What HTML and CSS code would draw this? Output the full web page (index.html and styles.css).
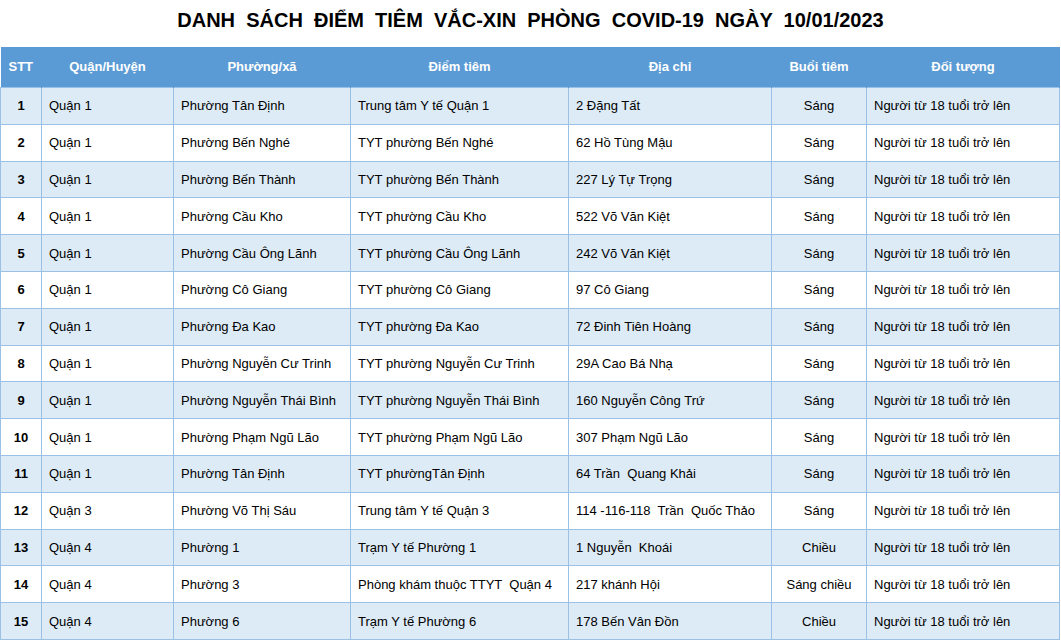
FILE: index.html
```html
<!DOCTYPE html>
<html lang="vi">
<head>
<meta charset="utf-8">
<title>Danh sách điểm tiêm</title>
<link rel="stylesheet" href="styles.css">
</head>
<body>
<h1 class="title">DANH  SÁCH  ĐIỂM  TIÊM  VẮC-XIN  PHÒNG  COVID-19  NGÀY  10/01/2023</h1>
<table class="grid">
  <colgroup>
    <col class="c-stt"><col class="c-quan"><col class="c-phuong"><col class="c-diem"><col class="c-diachi"><col class="c-buoi"><col class="c-doi">
  </colgroup>
  <thead>
    <tr><th>STT</th><th>Quận/Huyện</th><th>Phường/xã</th><th>Điểm tiêm</th><th>Địa chỉ</th><th>Buổi tiêm</th><th>Đối tượng</th></tr>
  </thead>
  <tbody>
    <tr><td class="num">1</td><td>Quận 1</td><td>Phường Tân Định</td><td>Trung tâm Y tế Quận 1</td><td>2 Đặng Tất</td><td class="mid">Sáng</td><td>Người từ 18 tuổi trở lên</td></tr>
    <tr><td class="num">2</td><td>Quận 1</td><td>Phường Bến Nghé</td><td>TYT phường Bến Nghé</td><td>62 Hồ Tùng Mậu</td><td class="mid">Sáng</td><td>Người từ 18 tuổi trở lên</td></tr>
    <tr><td class="num">3</td><td>Quận 1</td><td>Phường Bến Thành</td><td>TYT phường Bến Thành</td><td>227 Lý Tự Trọng</td><td class="mid">Sáng</td><td>Người từ 18 tuổi trở lên</td></tr>
    <tr><td class="num">4</td><td>Quận 1</td><td>Phường Cầu Kho</td><td>TYT phường Cầu Kho</td><td>522 Võ Văn Kiệt</td><td class="mid">Sáng</td><td>Người từ 18 tuổi trở lên</td></tr>
    <tr><td class="num">5</td><td>Quận 1</td><td>Phường Cầu Ông Lãnh</td><td>TYT phường Cầu Ông Lãnh</td><td>242 Võ Văn Kiệt</td><td class="mid">Sáng</td><td>Người từ 18 tuổi trở lên</td></tr>
    <tr><td class="num">6</td><td>Quận 1</td><td>Phường Cô Giang</td><td>TYT phường Cô Giang</td><td>97 Cô Giang</td><td class="mid">Sáng</td><td>Người từ 18 tuổi trở lên</td></tr>
    <tr><td class="num">7</td><td>Quận 1</td><td>Phường Đa Kao</td><td>TYT phường Đa Kao</td><td>72 Đinh Tiên Hoàng</td><td class="mid">Sáng</td><td>Người từ 18 tuổi trở lên</td></tr>
    <tr><td class="num">8</td><td>Quận 1</td><td>Phường Nguyễn Cư Trinh</td><td>TYT phường Nguyễn Cư Trinh</td><td>29A Cao Bá Nhạ</td><td class="mid">Sáng</td><td>Người từ 18 tuổi trở lên</td></tr>
    <tr><td class="num">9</td><td>Quận 1</td><td>Phường Nguyễn Thái Bình</td><td>TYT phường Nguyễn Thái Bình</td><td>160 Nguyễn Công Trứ</td><td class="mid">Sáng</td><td>Người từ 18 tuổi trở lên</td></tr>
    <tr><td class="num">10</td><td>Quận 1</td><td>Phường Phạm Ngũ Lão</td><td>TYT phường Phạm Ngũ Lão</td><td>307 Phạm Ngũ Lão</td><td class="mid">Sáng</td><td>Người từ 18 tuổi trở lên</td></tr>
    <tr><td class="num">11</td><td>Quận 1</td><td>Phường Tân Định</td><td>TYT phườngTân Định</td><td>64 Trần  Quang Khải</td><td class="mid">Sáng</td><td>Người từ 18 tuổi trở lên</td></tr>
    <tr><td class="num">12</td><td>Quận 3</td><td>Phường Võ Thị Sáu</td><td>Trung tâm Y tế Quận 3</td><td>114 -116-118  Trần  Quốc Thảo</td><td class="mid">Sáng</td><td>Người từ 18 tuổi trở lên</td></tr>
    <tr><td class="num">13</td><td>Quận 4</td><td>Phường 1</td><td>Trạm Y tế Phường 1</td><td>1 Nguyễn  Khoái</td><td class="mid">Chiều</td><td>Người từ 18 tuổi trở lên</td></tr>
    <tr><td class="num">14</td><td>Quận 4</td><td>Phường 3</td><td>Phòng khám thuộc TTYT  Quận 4</td><td>217 khánh Hội</td><td class="mid">Sáng chiều</td><td>Người từ 18 tuổi trở lên</td></tr>
    <tr><td class="num">15</td><td>Quận 4</td><td>Phường 6</td><td>Trạm Y tế Phường 6</td><td>178 Bến Vân Đồn</td><td class="mid">Chiều</td><td>Người từ 18 tuổi trở lên</td></tr>
  </tbody>
</table>
</body>
</html>
```

FILE: styles.css
```css
html, body {
  margin: 0;
  padding: 0;
  background: #ffffff;
}
body {
  font-family: "Liberation Sans", Arial, sans-serif;
  color: #000;
}
.title {
  margin: 0;
  height: 47px;
  line-height: 40px;
  text-align: center;
  font-size: 20px;
  font-weight: bold;
  white-space: pre;
}
.grid {
  border-collapse: collapse;
  table-layout: fixed;
  width: 1059px;
  font-size: 13px;
}
.c-stt { width: 41px; }
.c-quan { width: 132px; }
.c-phuong { width: 177px; }
.c-diem { width: 218px; }
.c-diachi { width: 203px; }
.c-buoi { width: 95px; }
.c-doi { width: 193px; }
.grid th {
  background: #5b9bd5;
  color: #ffffff;
  font-weight: bold;
  height: 38px;
  padding: 0 0 2px;
  text-align: center;
  vertical-align: middle;
  border: 0;
  border-right: 1px solid #5b9bd5;
}
.grid td {
  height: 35.8px;
  padding: 0 0 0 7px;
  border: 1px solid #9bc2e6;
  white-space: pre;
  vertical-align: middle;
  overflow: hidden;
}
.grid tbody tr:nth-child(odd) td {
  background: #ddebf7;
}
.grid td.num {
  text-align: center;
  font-weight: bold;
  padding: 0;
}
.grid td.mid {
  text-align: center;
  padding: 0;
}
```
